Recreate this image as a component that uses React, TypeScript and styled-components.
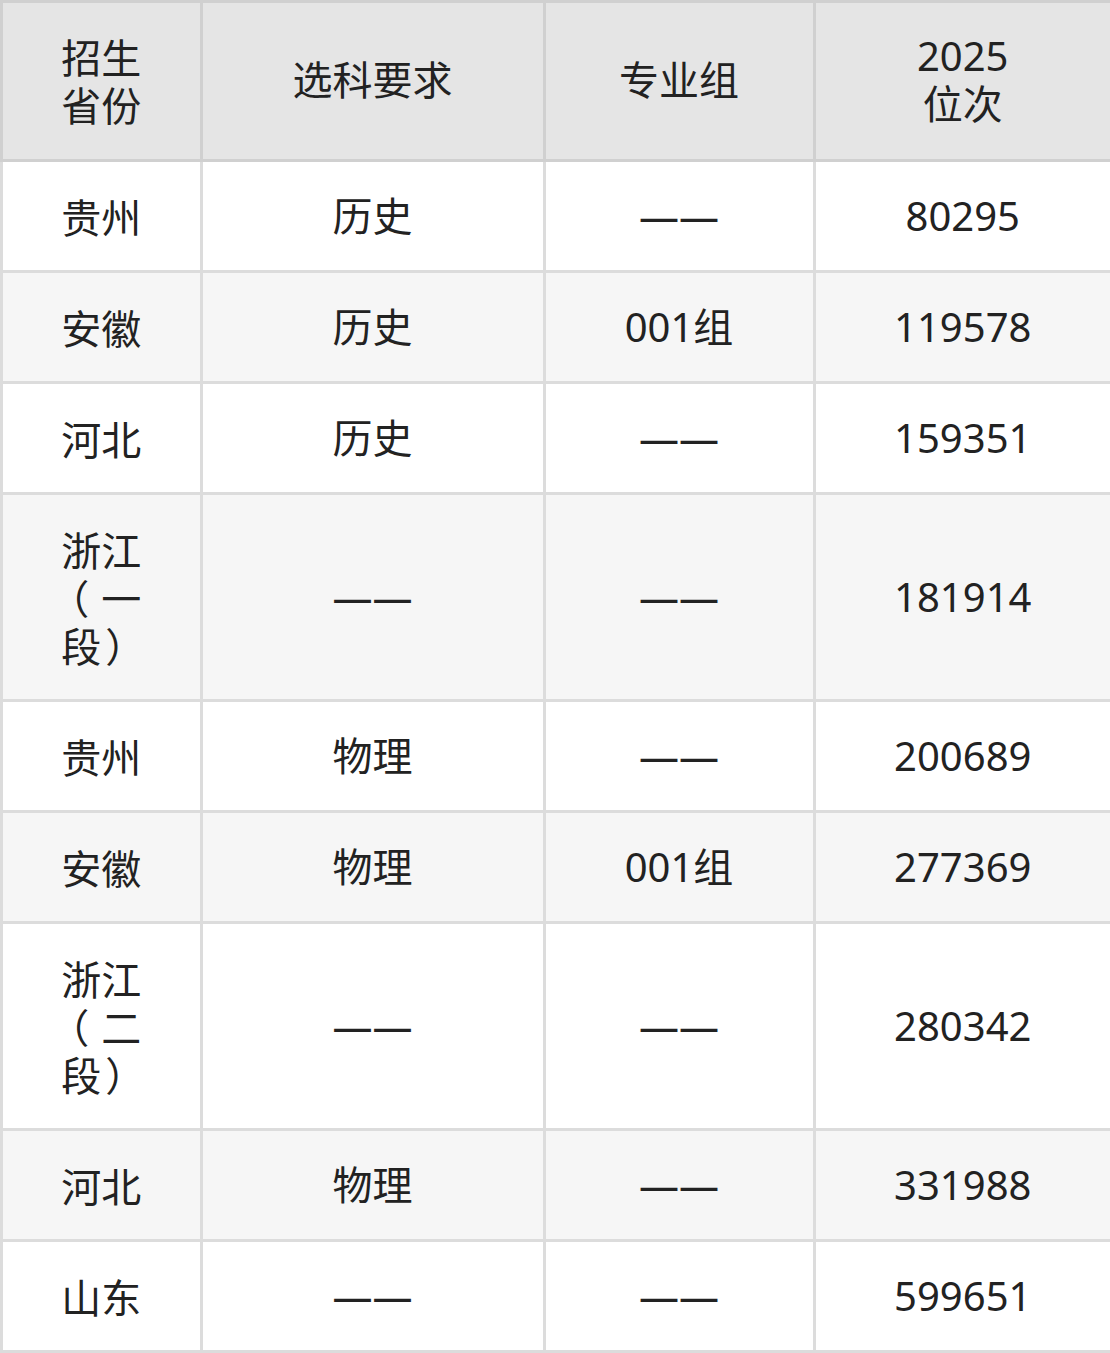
import styled, { createGlobalStyle } from 'styled-components';

const GlobalStyle = createGlobalStyle`
    html, body {
        margin: 0;
        padding: 0;
        background: #fff;
    }
`;

const Colors = {
    Text: '#222222',
    HeadBg: '#e5e5e5',
    HeadLine: '#d0d0d0',
    Line: '#dcdcdc',
    Stripe: '#f6f6f6',
};

const Table = styled.table`
    width: 1110px;
    table-layout: fixed;
    border-collapse: collapse;
    font-family: "Noto Sans", "Noto Sans CJK SC", sans-serif;
    font-size: 40px;
    line-height: 48px;
    color: ${Colors.Text};
`;

const HeadCell = styled.th`
    background: ${Colors.HeadBg};
    border: 3px solid ${Colors.HeadLine};
    font-weight: 400;
    padding: 29px 10px 31px;
    text-align: center;
    vertical-align: middle;
`;

const Row = styled.tr<{ $striped: boolean }>`
    background: ${p => (p.$striped ? Colors.Stripe : '#fff')};
`;

const Cell = styled.td`
    border: 3px solid ${Colors.Line};
    padding: 30px 10px;
    text-align: center;
    vertical-align: middle;
`;

const Narrow = styled.div`
    max-width: 100px;
    margin: 0 auto;
    font-family: "Noto Sans CJK SC", sans-serif;
`;

// full-width bracket in a one-em box, glyph nudged toward the middle
const Punct = styled.span<{ $open: boolean }>`
    display: inline-block;
    width: 1em;
    text-align: left;
    text-indent: ${p => (p.$open ? '-12px' : '4px')};
`;

const Province = ({ name }: { name: string }) => {
    const m = name.match(/^(.*)（(.*)）$/);
    if (!m) return <Narrow>{name}</Narrow>;
    return (
        <Narrow>
            {m[1]}
            <Punct $open>（</Punct>
            {m[2]}
            <Punct $open={false}>）</Punct>
        </Narrow>
    );
};

const rows = [
    ['贵州', '历史', '——', '80295'],
    ['安徽', '历史', '001组', '119578'],
    ['河北', '历史', '——', '159351'],
    ['浙江（一段）', '——', '——', '181914'],
    ['贵州', '物理', '——', '200689'],
    ['安徽', '物理', '001组', '277369'],
    ['浙江（二段）', '——', '——', '280342'],
    ['河北', '物理', '——', '331988'],
    ['山东', '——', '——', '599651'],
];

export default function App() {
    return (
        <>
            <GlobalStyle />
            <Table lang="zh-CN">
                <colgroup>
                    <col style={{ width: 199.5 }} />
                    <col style={{ width: 343 }} />
                    <col style={{ width: 270 }} />
                    <col style={{ width: 297.5 }} />
                </colgroup>
                <thead>
                    <tr>
                        <HeadCell><Narrow>招生省份</Narrow></HeadCell>
                        <HeadCell>选科要求</HeadCell>
                        <HeadCell>专业组</HeadCell>
                        <HeadCell>2025<br />位次</HeadCell>
                    </tr>
                </thead>
                <tbody>
                    {rows.map((r, i) => (
                        <Row key={i} $striped={i % 2 === 1}>
                            <Cell><Province name={r[0]} /></Cell>
                            <Cell>{r[1]}</Cell>
                            <Cell>{r[2]}</Cell>
                            <Cell>{r[3]}</Cell>
                        </Row>
                    ))}
                </tbody>
            </Table>
        </>
    );
}
